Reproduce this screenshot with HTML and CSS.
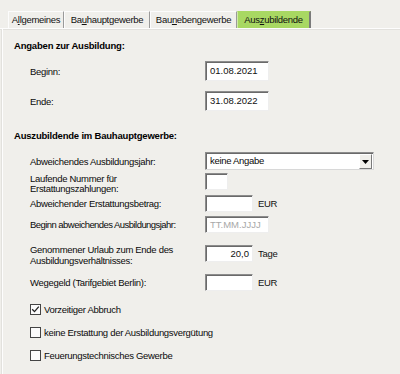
FILE: index.html
```html
<!DOCTYPE html>
<html lang="de">
<head>
<meta charset="utf-8">
<link rel="stylesheet" href="styles.css">
</head>
<body>
<div class="tabs">
  <div class="tab t1">A<u>l</u>lgemeines</div>
  <div class="tab t2">Ba<u>u</u>hauptgewerbe</div>
  <div class="tab t3">Bau<u>n</u>ebengewerbe</div>
  <div class="tab t4 active">Aus<u>z</u>ubildende</div>
</div>
<div class="panel">
  <div class="title first">Angaben zur Ausbildung:</div>
  <div class="row r-beginn"><span class="label">Beginn:</span><span class="input w64 tall">01.08.2021</span></div>
  <div class="row r-ende"><span class="label">Ende:</span><span class="input w64 tall">31.08.2022</span></div>

  <div class="title second">Auszubildende im Bauhauptgewerbe:</div>
  <div class="row r-jahr"><span class="label">Abweichendes Ausbildungsjahr:</span>
    <span class="select"><span class="select-text">keine Angabe</span><span class="select-btn"><svg width="7" height="4" viewBox="0 0 7 4"><path d="M0 0H7L3.5 4Z" fill="#000"/></svg></span></span>
  </div>
  <div class="row top r-nummer"><span class="label two">Laufende Nummer für<br>Erstattungszahlungen:</span><span class="input w23"></span></div>
  <div class="row r-betrag"><span class="label">Abweichender Erstattungsbetrag:</span><span class="field"><span class="input w48"></span><span class="unit">EUR</span></span></div>
  <div class="row r-abw"><span class="label narrow">Beginn abweichendes Ausbildungsjahr:</span><span class="input w64 disabled">TT.MM.JJJJ</span></div>
  <div class="row top r-urlaub"><span class="label two">Genommener Urlaub zum Ende des<br>Ausbildungsverhältnisses:</span><span class="field shift"><span class="input w48 right">20,0</span><span class="unit">Tage</span></span></div>
  <div class="row r-wege"><span class="label">Wegegeld (Tarifgebiet Berlin):</span><span class="field"><span class="input w48"></span><span class="unit">EUR</span></span></div>

  <div class="check c1"><span class="box"><svg width="9" height="9" viewBox="0 0 9 9"><path d="M1.2 4.3L3.5 6.6L7.8 1.6" fill="none" stroke="#222" stroke-width="1.3"/></svg></span>Vorzeitiger Abbruch</div>
  <div class="check c2"><span class="box"></span>keine Erstattung der Ausbildungsvergütung</div>
  <div class="check c3"><span class="box"></span>Feuerungstechnisches Gewerbe</div>
</div>
</body>
</html>
```
FILE: styles.css
```css
html, body {
  margin: 0;
  padding: 0;
}
body {
  width: 400px;
  height: 374px;
  overflow: hidden;
  background: #f0efeb;
  font-family: "Liberation Sans", Arial, sans-serif;
  font-size: 9.5px;
  letter-spacing: -0.3px;
  color: #0a0a0a;
}
.tabs {
  display: flex;
  height: 17px;
  padding: 11px 0 0 8px;
  border-bottom: 1px solid #fdfdfd;
  box-shadow: 0 1px 0 #e2e1dd;
}
.tab {
  box-sizing: border-box;
  height: 17px;
  line-height: 16px;
  text-align: center;
  border-top: 1px solid #fcfcfc;
  border-left: 1px solid #fcfcfc;
  border-right: 1px solid #9a9a9a;
  color: #111;
}
.tab u { text-underline-offset: 1px; }
.t1 { width: 56px; }
.t2 { width: 86px; }
.t3 { width: 87px; }
.t4 { width: 74px; }
.active {
  background: #a8d862;
  border-top-color: #a8d862;
  border-left-color: #cfe9a8;
  border-right: 2px solid #7a7a7a;
}
.panel {
  margin-left: 2px;
  border-left: 1px solid #fdfdfd;
  padding-left: 11px;
  height: 345px;
  box-shadow: -1px 0 0 #e2e1dd;
}
.title {
  font-weight: bold;
  letter-spacing: -0.2px;
  line-height: 12px;
  color: #000;
}
.first { padding-top: 11px; }
.second { margin-top: 19px; }
.row {
  display: grid;
  grid-template-columns: 175px auto;
  align-items: center;
  padding-left: 16px;
}
.row.top { align-items: start; }
.label { line-height: 11px; }
.label.narrow { letter-spacing: -0.55px; }
.label.two { line-height: 10px; padding-top: 1px; }
.r-urlaub .label.two { line-height: 11px; padding-top: 0; }
.r-beginn { margin-top: 9px; }
.r-ende { margin-top: 10px; }
.r-jahr { margin-top: 10px; }
.r-nummer { margin-top: 3px; }
.r-betrag { margin-top: 1px; }
.r-abw { margin-top: 4px; }
.r-urlaub { margin-top: 11px; }
.r-wege { margin-top: 8px; }
.field {
  display: flex;
  align-items: center;
}
.field.shift { margin-top: 1px; }
.input {
  box-sizing: border-box;
  display: block;
  height: 17px;
  line-height: 15px;
  padding: 0 4px;
  background: #fff;
  border: 1px solid;
  border-color: #8c8c8c #eeeeee #eeeeee #8c8c8c;
  box-shadow: inset 1px 1px 0 #6a6a6a;
  color: #111;
  letter-spacing: 0;
}
.input.tall { height: 20px; line-height: 18px; }
.w64 { width: 64px; }
.w48 { width: 48px; }
.w23 { width: 23px; }
.right { text-align: right; padding-right: 3px; }
.disabled { color: #a8a8a8; }
.unit { margin-left: 5px; color: #111; }
.select {
  box-sizing: border-box;
  display: flex;
  width: 169px;
  height: 18px;
  background: #fff;
  border: 1px solid;
  border-color: #8c8c8c #d8d8d8 #d8d8d8 #8c8c8c;
  box-shadow: inset 1px 1px 0 #6a6a6a;
}
.select-text {
  flex: 1;
  line-height: 15px;
  padding-left: 4px;
}
.select-btn {
  box-sizing: border-box;
  width: 13px;
  height: 15px;
  margin: 1px 1px 0 0;
  background: #f0efeb;
  border: 1px solid;
  border-color: #fff #7a7a7a #7a7a7a #fff;
  display: flex;
  align-items: center;
  justify-content: center;
}
.check {
  display: flex;
  align-items: center;
  height: 13px;
  padding-left: 16px;
  line-height: 13px;
}
.c1 { margin-top: 12px; }
.c2, .c3 { margin-top: 10px; }
.box {
  box-sizing: border-box;
  width: 11px;
  height: 11px;
  margin-right: 3px;
  border: 1px solid #444;
  background: #fbfbfb;
  display: flex;
  align-items: center;
  justify-content: center;
}
```
